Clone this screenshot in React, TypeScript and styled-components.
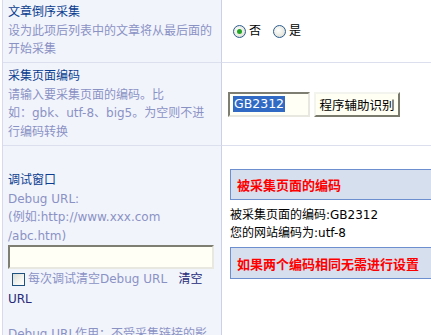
import { createGlobalStyle, styled } from 'styled-components';

const GlobalStyle = createGlobalStyle`
  html, body {
    margin: 0;
    padding: 0;
    background: #ffffff;
    overflow: hidden;
  }
  body {
    font-family: "DejaVu Sans", "Noto Sans CJK SC", sans-serif;
    font-size: 12px;
  }
`;

const Table = styled.div`
  width: 470px;
  margin-left: 2px;
  border-left: 1px solid #d6daec;
  display: grid;
  grid-template-columns: 219px 1fr;
`;

const LabelCell = styled.div<{ $height: number; $top?: number }>`
  height: ${(p) => p.$height}px;
  background: #f2f4fc;
  border-right: 1px solid #cdd1e8;
  border-bottom: 1px solid #dcdfee;
  padding: ${(p) => (p.$top !== undefined ? `${p.$top}px 6px 0 5px` : '0 6px 0 5px')};
  box-sizing: border-box;
  display: flex;
  flex-direction: column;
  justify-content: ${(p) => (p.$top !== undefined ? 'flex-start' : 'center')};
  line-height: 18.5px;
  overflow: hidden;

  & > * {
    flex-shrink: 0;
  }
`;

const ValueCell = styled.div<{ $height: number; $top?: number }>`
  height: ${(p) => p.$height}px;
  border-bottom: 1px solid #dcdfee;
  box-sizing: border-box;
  padding: ${(p) => (p.$top !== undefined ? `${p.$top}px 0 0 6px` : '0 0 0 6px')};
  display: flex;
  flex-direction: column;
  justify-content: ${(p) => (p.$top !== undefined ? 'flex-start' : 'center')};
  overflow: hidden;

  & > * {
    flex-shrink: 0;
  }
`;

const Title = styled.div`
  color: #0a3d8f;
`;

const Hint = styled.div`
  color: #8a92c4;
`;

const RadioGroup = styled.div`
  display: flex;
  align-items: center;
  padding-left: 5px;
  color: #000;
`;

const RadioOption = styled.label`
  display: flex;
  align-items: center;
  gap: 3px;
  margin-right: 12px;
  line-height: 14px;
`;

const RadioDot = styled.span<{ $checked?: boolean }>`
  width: 11px;
  height: 11px;
  border-radius: 50%;
  border: 1px solid #2a5d8f;
  background: radial-gradient(circle at 40% 40%, #ffffff 0%, #e8e8e0 60%, #c8c8c0 100%);
  display: flex;
  align-items: center;
  justify-content: center;

  &::after {
    content: '';
    display: ${(p) => (p.$checked ? 'block' : 'none')};
    width: 5px;
    height: 5px;
    border-radius: 50%;
    background: #22a526;
  }
`;

const InputRow = styled.div`
  display: flex;
  align-items: center;
  gap: 4px;
`;

const FakeInput = styled.div<{ $width: number; $height: number }>`
  width: ${(p) => p.$width}px;
  height: ${(p) => p.$height}px;
  box-sizing: border-box;
  background: #fffff6;
  border-top: 2px solid #7e7e72;
  border-left: 2px solid #7e7e72;
  border-right: 2px solid #e8e8e0;
  border-bottom: 2px solid #e8e8e0;
  padding: 2px 3px;
  display: flex;
  align-items: center;
`;

const Selected = styled.span`
  background: #316ac5;
  color: #fff;
  font-size: 12.5px;
  line-height: 16px;
  padding: 0 1px;
`;

const Button = styled.button`
  height: 25px;
  width: 86px;
  box-sizing: border-box;
  padding: 0;
  background: #fffff4;
  border-top: 2px solid #f4f4ee;
  border-left: 2px solid #f4f4ee;
  border-right: 2px solid #7a7a6c;
  border-bottom: 2px solid #7a7a6c;
  font-family: "Noto Sans CJK SC", sans-serif;
  font-size: 12.5px;
  color: #000;
`;

const Notice = styled.div<{ $height: number }>`
  height: ${(p) => p.$height}px;
  box-sizing: border-box;
  margin-left: 2px;
  background: #d6dfee;
  border: 1px solid #6d8fcf;
  color: #ff0000;
  font-weight: bold;
  font-size: 13px;
  padding-left: 6px;
  display: flex;
  align-items: center;
`;

const InfoLines = styled.div`
  color: #000;
  line-height: 18px;
  padding: 6px 0 5px 2px;
`;

const CheckRow = styled.div`
  display: flex;
  align-items: center;
  line-height: 18px;
`;

const CheckBox = styled.span`
  width: 11px;
  height: 11px;
  margin: 0 3px 0 4px;
  border: 1px solid #1c5180;
  background: linear-gradient(135deg, #dcdcd6 0%, #f4f4f0 60%, #ffffff 100%);
`;

const LinkText = styled.span`
  color: #262a78;
  line-height: 20px;
`;

const Spacer = styled.div`
  height: 16px;
`;

export default function App() {
  return (
    <>
      <GlobalStyle />
      <Table>
        <LabelCell $height={63}>
          <Title>文章倒序采集</Title>
          <Hint>设为此项后列表中的文章将从最后面的开始采集</Hint>
        </LabelCell>
        <ValueCell $height={63}>
          <RadioGroup>
            <RadioOption>
              <RadioDot $checked />否
            </RadioOption>
            <RadioOption>
              <RadioDot />是
            </RadioOption>
          </RadioGroup>
        </ValueCell>

        <LabelCell $height={83}>
          <Title>采集页面编码</Title>
          <Hint>
            请输入要采集页面的编码。比
            <br />
            如：gbk、utf-8、big5。为空则不进
            <br />
            行编码转换
          </Hint>
        </LabelCell>
        <ValueCell $height={83}>
          <InputRow>
            <FakeInput $width={82} $height={25}>
              <Selected>GB2312</Selected>
            </FakeInput>
            <Button>程序辅助识别</Button>
          </InputRow>
        </ValueCell>

        <LabelCell $height={230} $top={25}>
          <Title>调试窗口</Title>
          <Hint>Debug URL:</Hint>
          <Hint>(例如:http://www.xxx.com</Hint>
          <Hint>/abc.htm)</Hint>
          <FakeInput $width={206} $height={24} />
          <CheckRow>
            <CheckBox />
            <Hint>每次调试清空Debug URL</Hint>
            <LinkText>&nbsp;&nbsp;&nbsp;清空</LinkText>
          </CheckRow>
          <LinkText>URL</LinkText>
          <Spacer />
          <Hint>Debug URL作用：不受采集链接的影响</Hint>
        </LabelCell>
        <ValueCell $height={230} $top={23}>
          <Notice $height={31}>被采集页面的编码</Notice>
          <InfoLines>
            被采集页面的编码:GB2312
            <br />
            您的网站编码为:utf-8
          </InfoLines>
          <Notice $height={32}>如果两个编码相同无需进行设置</Notice>
        </ValueCell>
      </Table>
    </>
  );
}
